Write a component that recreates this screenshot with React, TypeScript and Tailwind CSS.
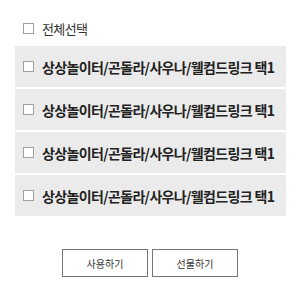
const items = [
  "상상놀이터/곤돌라/사우나/웰컴드링크 택1",
  "상상놀이터/곤돌라/사우나/웰컴드링크 택1",
  "상상놀이터/곤돌라/사우나/웰컴드링크 택1",
  "상상놀이터/곤돌라/사우나/웰컴드링크 택1",
]

function Box() {
  return <span className="block w-[11px] h-[11px] shrink-0 border border-[#a0a0a0] bg-white" />
}

export default function App() {
  return (
    <div
      className="w-[300px] h-[300px] pt-[18px] bg-white text-[#222] overflow-hidden"
      style={{ fontFamily: '"Noto Sans CJK KR", "Noto Sans", sans-serif' }}
    >
      {/* select all */}
      <div className="flex items-center gap-[8px] h-[20px] mb-[8px] pl-[23px]">
        <Box />
        <span className="text-[13px] tracking-[-0.6px] text-[#333] leading-none">전체선택</span>
      </div>

      {/* option rows */}
      <div className="flex flex-col gap-[2px] ml-[15px] w-[271px]">
        {items.map((label, i) => (
          <div key={i} className="flex items-center gap-[8px] h-[41px] bg-[#ebebeb] pl-[8px]">
            <Box />
            <span className="text-[14px] font-bold tracking-[-0.65px] leading-none whitespace-nowrap">
              {label}
            </span>
          </div>
        ))}
      </div>

      {/* actions */}
      <div className="flex justify-center gap-[4px] mt-[33px]">
        <button className="w-[86px] h-[28px] border border-[#777] bg-white text-[10px] text-[#333]">
          사용하기
        </button>
        <button className="w-[86px] h-[28px] border border-[#777] bg-white text-[10px] text-[#333]">
          선물하기
        </button>
      </div>
    </div>
  )
}
